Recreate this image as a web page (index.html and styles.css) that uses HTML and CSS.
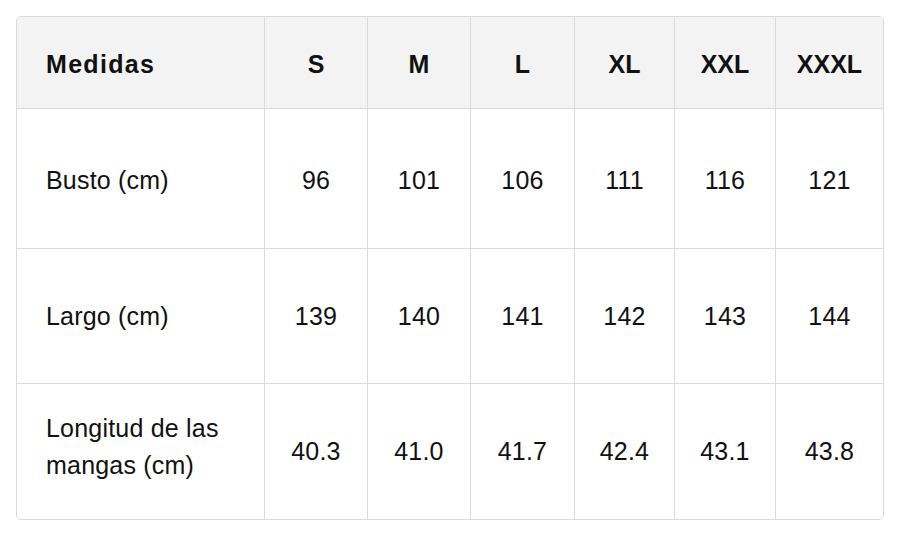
FILE: index.html
```html
<!DOCTYPE html>
<html lang="es">
<head>
<meta charset="utf-8">
<link rel="stylesheet" href="styles.css">
</head>
<body>
<div class="wrap">
<table class="sizes">
  <colgroup>
    <col class="c0"><col class="c1"><col class="c2"><col class="c3"><col class="c4"><col class="c5"><col class="c6">
  </colgroup>
  <thead>
    <tr class="head"><th class="label">Medidas</th><th>S</th><th>M</th><th>L</th><th>XL</th><th>XXL</th><th>XXXL</th></tr>
  </thead>
  <tbody>
    <tr class="r1"><td class="label">Busto (cm)</td><td>96</td><td>101</td><td>106</td><td>111</td><td>116</td><td>121</td></tr>
    <tr class="r2"><td class="label">Largo (cm)</td><td>139</td><td>140</td><td>141</td><td>142</td><td>143</td><td>144</td></tr>
    <tr class="r3"><td class="label">Longitud de las<br>mangas (cm)</td><td>40.3</td><td>41.0</td><td>41.7</td><td>42.4</td><td>43.1</td><td>43.8</td></tr>
  </tbody>
</table>
</div>
</body>
</html>
```
FILE: styles.css
```css
html, body { margin: 0; padding: 0; background: #fff; }
body { font-family: "Liberation Sans", Arial, sans-serif; color: #111; }
.wrap { padding: 16px 0 0 16px; }
.sizes {
  border-collapse: separate;
  border-spacing: 0;
  border: 1px solid #dadada;
  border-radius: 5px;
  overflow: hidden;
  table-layout: fixed;
  width: 867px;
}
.c0 { width: 248px; }
.c1 { width: 103px; }
.c2 { width: 103px; }
.c3 { width: 104px; }
.c4 { width: 100px; }
.c5 { width: 101px; }
.c6 { width: 107px; }
th, td {
  border-right: 1px solid #dadada;
  border-bottom: 1px solid #dadada;
  text-align: center;
  vertical-align: middle;
  padding: 0;
  font-size: 25px;
  line-height: 37px;
  box-sizing: border-box;
}
th:last-child, td:last-child { border-right: none; }
tbody tr:last-child td { border-bottom: none; }
th { background: #f3f3f3; font-weight: 700; height: 92px; padding-top: 3px; }
th.label { letter-spacing: 1.3px; }
td { font-weight: 400; letter-spacing: 0.2px; }
.label { text-align: left; padding-left: 29px; }
.r1 td { height: 140px; padding-top: 4px; }
.r2 td { height: 135px; padding-top: 1px; }
.r3 td { height: 135px; }
.r3 td.label { padding-bottom: 10px; }
```
